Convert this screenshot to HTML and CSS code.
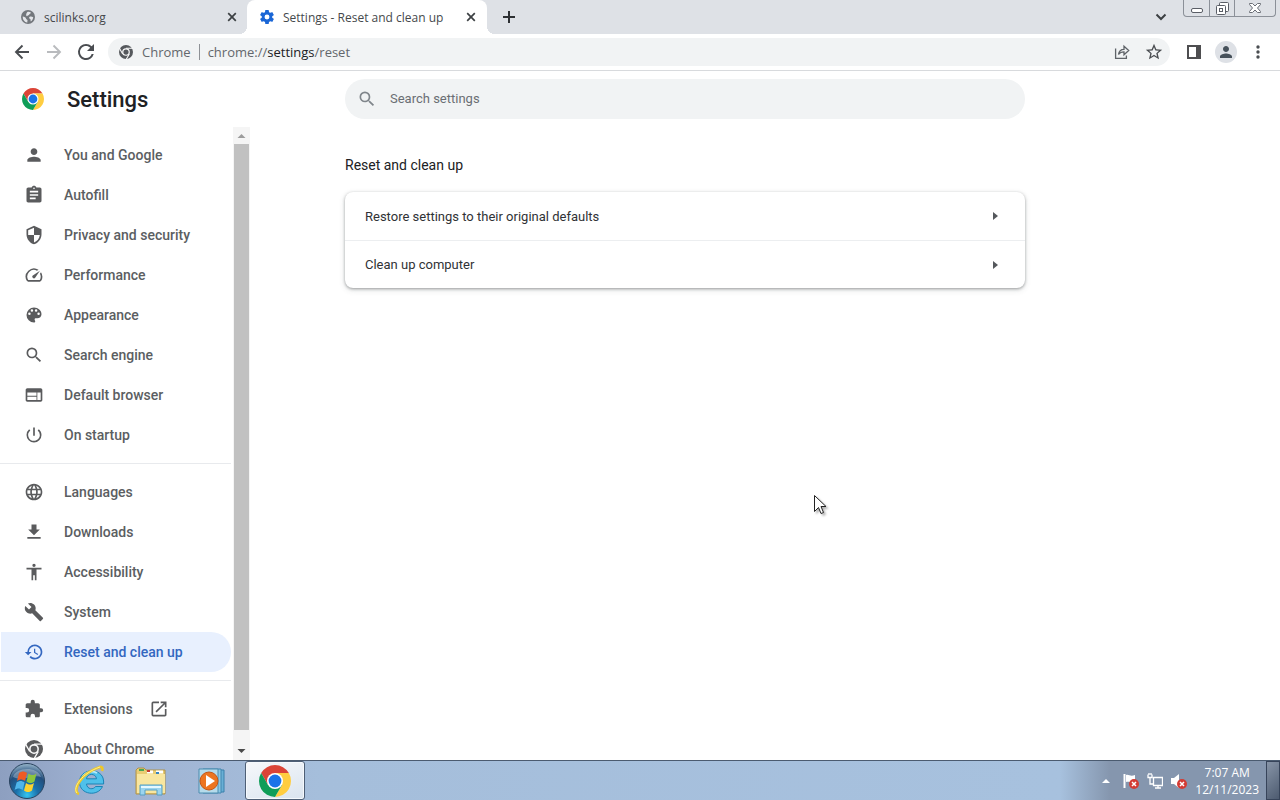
FILE: index.html
```html
<!DOCTYPE html>
<html lang="en">
<head>
<meta charset="utf-8">
<title>Settings - Reset and clean up</title>
<link rel="stylesheet" href="styles.css">
</head>
<body>
<svg class="defs" aria-hidden="true">
  <symbol id="close" viewBox="0 0 10 10"><path d="M1.2 1.2l7.6 7.6M8.8 1.2L1.2 8.8" stroke="currentColor" stroke-width="1.7" fill="none"/></symbol>
  <symbol id="search" viewBox="0 0 24 24"><path d="M15.5 14h-.79l-.28-.27A6.471 6.471 0 0 0 16 9.5 6.5 6.5 0 1 0 9.5 16c1.61 0 3.09-.59 4.23-1.57l.27.28v.79l5 4.99L20.49 19l-4.99-5zm-6 0C7.01 14 5 11.99 5 9.5S7.01 5 9.5 5 14 7.01 14 9.5 11.99 14 9.5 14z"/></symbol>
  <symbol id="person" viewBox="0 0 24 24"><path d="M12 12c2.21 0 4-1.79 4-4s-1.79-4-4-4-4 1.79-4 4 1.79 4 4 4zm0 2c-2.67 0-8 1.34-8 4v2h16v-2c0-2.66-5.33-4-8-4z"/></symbol>
  <symbol id="chrome-color" viewBox="4 4 40 40">
    <path fill="#db4437" d="M6.68 14A20 20 0 0 1 41.32 14H24L15.34 29z"/>
    <path fill="#ffcd40" d="M41.32 14A20 20 0 0 1 24 44L32.66 29 24 14z"/>
    <path fill="#0f9d58" d="M24 44A20 20 0 0 1 6.68 14L15.34 29H32.66z"/>
    <circle cx="24" cy="24" r="10" fill="#fff"/><circle cx="24" cy="24" r="8" fill="#1a73e8"/>
  </symbol>
  <symbol id="chrome-mono" viewBox="4 4 40 40">
    <circle cx="24" cy="24" r="20"/>
    <path d="M24 13H44M14.5 29.5L4.5 12.200M33.500 29.500L23.500 46.800" stroke="#fafafa" stroke-width="3" fill="none"/>
    <circle cx="24" cy="24" r="11" fill="#fafafa"/><circle cx="24" cy="24" r="7.500"/>
  </symbol>
</svg>

<header class="tabstrip">
  <div class="tab">
    <svg class="favicon" viewBox="0 0 16 16"><circle cx="8" cy="8" r="8" fill="#73777c"/><path d="M2 7.500c2 .2 3.500 1 3.800 2.500.2 1 1.700.8 1.700 2 0 1-.5 1.500-.3 2.500C4 14 1.800 11 2 7.500zM7 2.500c1-.6 3-.5 4.500.5-.8.500-.5 1.300-1.500 1.500-.8.200-.5 1.500-1.800 1.500-.8 0-.6 1-1.400 1C5.500 7 5.600 4 7 2.500zM9.500 8c1.500-1 3-.6 4.500.2-.2 2-1.300 3.800-2.800 4.800-.6-1 .2-2-.7-2.700C9.600 9.800 9 9 9.500 8z" fill="#e3e5e9"/></svg>
    <span class="tab-title">scilinks.org</span>
    <button class="icon-btn" aria-label="Close tab"><svg class="ico-x"><use href="#close"/></svg></button>
  </div>
  <div class="tab active">
    <svg class="favicon" viewBox="2 2 20 20" fill="#1a66d6"><path d="M19.430 12.980c.04-.32.07-.64.07-.98s-.03-.66-.07-.98l2.110-1.650c.19-.15.24-.42.12-.64l-2-3.460c-.12-.22-.39-.3-.61-.22l-2.490 1c-.52-.4-1.080-.73-1.690-.98l-.38-2.650A.488.488 0 0 0 14 2h-4c-.25 0-.46.18-.49.42l-.38 2.650c-.61.25-1.170.59-1.690.98l-2.490-1c-.23-.09-.49 0-.61.22l-2 3.460c-.13.22-.07.49.12.64l2.110 1.650c-.04.32-.07.65-.07.98s.03.66.07.98l-2.110 1.650c-.19.15-.24.42-.12.64l2 3.460c.12.22.39.3.61.22l2.490-1c.52.4 1.080.73 1.690.98l.38 2.650c.03.24.24.42.49.42h4c.25 0 .46-.18.49-.42l.38-2.650c.61-.25 1.170-.59 1.690-.98l2.490 1c.23.09.49 0 .61-.22l2-3.460c.12-.22.07-.49-.12-.64l-2.110-1.650zM12 15.500a3.500 3.500 0 1 1 0-7 3.500 3.500 0 0 1 0 7z"/></svg>
    <span class="tab-title">Settings - Reset and clean up</span>
    <button class="icon-btn" aria-label="Close tab"><svg class="ico-x"><use href="#close"/></svg></button>
  </div>
  <button class="icon-btn new-tab" aria-label="New tab"><svg width="12" height="12" viewBox="0 0 12 12"><path d="M6 0v12M0 6h12" stroke="#2d3033" stroke-width="2"/></svg></button>
  <button class="icon-btn tab-search" aria-label="Search tabs"><svg width="12" height="8" viewBox="0 0 12 8"><path d="M1.500 1.500L6 6l4.500-4.500" stroke="#3c4043" stroke-width="2" fill="none"/></svg></button>
  <div class="win-controls">
    <button aria-label="Minimize"><svg width="14" height="16" viewBox="0 0 14 16"><rect x="1.500" y="8.500" width="11" height="4" rx="1.500" fill="#fff" stroke="#5a5e66"/></svg></button>
    <button aria-label="Restore"><svg width="14" height="16" viewBox="0 0 14 16" fill="#fff" stroke="#5a5e66"><rect x="4.500" y="2.500" width="9" height="9" rx="1"/><rect x="1.500" y="5.500" width="9" height="9" rx="1"/><rect x="4.500" y="8.500" width="3" height="3"/></svg></button>
    <button class="wide" aria-label="Close"><svg width="14" height="16" viewBox="0 0 14 16"><path d="M1.500 3.500h3L7 6l2.500-2.500h3v1L9.500 8l3 3.500v1h-3L7 10l-2.500 2.500h-3v-1l3-3.500-3-3.500z" fill="#fff" stroke="#6a6e76"/></svg></button>
  </div>
</header>

<nav class="toolbar" aria-label="Browser toolbar">
  <button class="icon-btn nav-btn" aria-label="Back"><svg width="16" height="16" viewBox="0 0 16 16"><path d="M15 8H2.500M8.500 1.500L2 8l6.500 6.500" fill="none" stroke="#4a4d51" stroke-width="1.900"/></svg></button>
  <button class="icon-btn nav-btn" aria-label="Forward"><svg width="16" height="16" viewBox="0 0 16 16"><path d="M1 8h12.500M7.500 1.500L14 8l-6.500 6.500" fill="none" stroke="#b9bbbe" stroke-width="1.900"/></svg></button>
  <button class="icon-btn nav-btn" aria-label="Reload"><svg width="20" height="20" viewBox="2 2 20 20" fill="#4a4d51"><path d="M17.650 6.350A7.958 7.958 0 0 0 12 4a8 8 0 1 0 7.730 10h-2.080A5.990 5.990 0 0 1 12 18c-3.310 0-6-2.690-6-6s2.690-6 6-6c1.660 0 3.140.69 4.220 1.780L13 11h7V4l-2.350 2.350z"/></svg></button>
  <div class="omnibox">
    <svg class="ico14 grey"><use href="#chrome-mono"/></svg>
    <span class="chip">Chrome</span>
    <span class="url">chrome://<b>settings</b>/reset</span>
    <button class="icon-btn act" aria-label="Share"><svg width="16" height="16" viewBox="0 0 16 16" fill="none" stroke="#5f6368" stroke-width="1.300"><path d="M1.600 4.500v9.900h10.800v-3M4.500 10.500C5 7 7 5.300 10 5.300V2.200l4.700 4.300L10 10.800V7.800C7.500 7.800 5.800 8.500 4.500 10.500z"/></svg></button>
    <button class="icon-btn act" aria-label="Bookmark"><svg width="18" height="18" viewBox="1 1 22 22" fill="#4a4d51"><path d="M22 9.240l-7.190-.62L12 2 9.190 8.630 2 9.240l5.460 4.730L5.820 21 12 17.270 18.180 21l-1.630-7.030L22 9.240zM12 15.400l-3.760 2.270 1-4.280-3.320-2.880 4.380-.38L12 6.100l1.710 4.040 4.380.38-3.320 2.880 1 4.280L12 15.400z"/></svg></button>
  </div>
  <button class="icon-btn nav-btn" aria-label="Side panel"><svg width="14" height="14" viewBox="0 0 14 14"><rect x="1" y="1" width="12" height="12" fill="#fff" stroke="#4e4e50" stroke-width="2"/><path d="M9 1h4v12H9z" fill="#4e4e50"/></svg></button>
  <button class="icon-btn nav-btn" aria-label="Profile"><svg class="avatar"><use href="#person"/></svg></button>
  <button class="icon-btn nav-btn" aria-label="Menu"><svg width="4" height="14" viewBox="0 0 4 14" fill="#4a4d51"><circle cx="2" cy="2" r="1.700"/><circle cx="2" cy="7" r="1.700"/><circle cx="2" cy="12" r="1.700"/></svg></button>
</nav>

<div class="page">
  <div class="page-head">
    <div class="brand"><svg class="logo"><use href="#chrome-color"/></svg><h1>Settings</h1></div>
    <label class="search"><svg class="ico20"><use href="#search"/></svg><input type="search" placeholder="Search settings" aria-label="Search settings"></label>
  </div>
  <div class="page-body">
    <nav class="sidebar" aria-label="Settings">
      <div class="menu">
        <a href="#you"><svg class="ico20"><use href="#person"/></svg>You and Google</a>
        <a href="#autofill"><svg class="ico20" viewBox="0 0 24 24"><path d="M19 3h-4.180C14.400 1.840 13.300 1 12 1c-1.300 0-2.400.84-2.820 2H5c-1.100 0-2 .9-2 2v14c0 1.100.9 2 2 2h14c1.100 0 2-.9 2-2V5c0-1.100-.9-2-2-2zm-7 0c.55 0 1 .45 1 1s-.45 1-1 1-1-.45-1-1 .45-1 1-1zm2 14H7v-2h7v2zm3-4H7v-2h10v2zm0-4H7V7h10v2z"/></svg>Autofill</a>
        <a href="#privacy"><svg class="ico20" viewBox="0 0 24 24"><path d="M12 1L3 5v6c0 5.550 3.840 10.740 9 12 5.160-1.260 9-6.450 9-12V5l-9-4zm0 10.990h7c-.53 4.120-3.280 7.790-7 8.940V12H5V6.300l7-3.110v8.800z"/></svg>Privacy and security</a>
        <a href="#performance"><svg class="ico20" viewBox="0 0 24 24"><path d="M20.380 8.570l-1.230 1.850a8 8 0 0 1-.22 7.580H5.070A8 8 0 0 1 15.580 6.850l1.850-1.230A10 10 0 0 0 3.350 19a2 2 0 0 0 1.720 1h13.850a2 2 0 0 0 1.740-1 10 10 0 0 0-.27-10.440zm-9.790 6.840a2 2 0 0 0 2.830 0l5.660-8.490-8.490 5.660a2 2 0 0 0 0 2.830z"/></svg>Performance</a>
        <a href="#appearance"><svg class="ico20" viewBox="0 0 24 24"><path d="M12 3a9 9 0 0 0 0 18c.83 0 1.500-.67 1.500-1.500 0-.39-.15-.74-.39-1.010-.23-.26-.38-.61-.38-.99 0-.83.67-1.500 1.500-1.500H16c2.760 0 5-2.240 5-5 0-4.420-4.030-8-9-8zm-5.500 9a1.500 1.500 0 1 1 0-3 1.500 1.500 0 0 1 0 3zm3-4a1.500 1.500 0 1 1 0-3 1.500 1.500 0 0 1 0 3zm5 0a1.500 1.500 0 1 1 0-3 1.500 1.500 0 0 1 0 3zm3 4a1.500 1.500 0 1 1 0-3 1.500 1.500 0 0 1 0 3z"/></svg>Appearance</a>
        <a href="#engine"><svg class="ico20"><use href="#search"/></svg>Search engine</a>
        <a href="#browser"><svg class="ico20" viewBox="0 0 24 24"><path d="M20 4H4c-1.100 0-1.990.9-1.990 2L2 18c0 1.100.9 2 2 2h16c1.100 0 2-.9 2-2V6c0-1.100-.9-2-2-2zm-5 14H4v-4h11v4zm0-5H4V9h11v4zm5 5h-4V9h4v9z"/></svg>Default browser</a>
        <a href="#startup"><svg class="ico20" viewBox="0 0 24 24"><path d="M13 3h-2v10h2V3zm4.830 2.170l-1.420 1.420A6.920 6.920 0 0 1 19 12c0 3.870-3.130 7-7 7A6.995 6.995 0 0 1 7.580 6.580L6.170 5.170A8.932 8.932 0 0 0 3 12a9 9 0 0 0 18 0c0-2.740-1.230-5.180-3.170-6.830z"/></svg>On startup</a>
        <hr>
        <a href="#languages"><svg class="ico20" viewBox="0 0 24 24"><path d="M11.990 2C6.470 2 2 6.480 2 12s4.470 10 9.990 10C17.520 22 22 17.520 22 12S17.520 2 11.990 2zm6.930 6h-2.950a15.650 15.650 0 0 0-1.380-3.560A8.030 8.030 0 0 1 18.920 8zM12 4.040c.83 1.200 1.480 2.530 1.910 3.960h-3.820c.43-1.430 1.080-2.760 1.910-3.960zM4.260 14C4.100 13.360 4 12.690 4 12s.1-1.360.26-2h3.380c-.08.66-.14 1.320-.14 2s.06 1.340.14 2H4.260zm.82 2h2.950c.32 1.250.78 2.450 1.380 3.560A7.987 7.987 0 0 1 5.080 16zm2.950-8H5.080a7.987 7.987 0 0 1 4.330-3.560A15.650 15.650 0 0 0 8.030 8zM12 19.960c-.83-1.200-1.480-2.530-1.910-3.960h3.820c-.43 1.430-1.080 2.760-1.910 3.960zM14.340 14H9.660c-.09-.66-.16-1.320-.16-2s.07-1.350.16-2h4.680c.09.65.16 1.320.16 2s-.07 1.340-.16 2zm.25 5.560c.6-1.110 1.060-2.310 1.380-3.560h2.950a8.030 8.030 0 0 1-4.330 3.560zM16.360 14c.08-.66.14-1.320.14-2s-.06-1.340-.14-2h3.380c.16.64.26 1.310.26 2s-.1 1.360-.26 2h-3.380z"/></svg>Languages</a>
        <a href="#downloads"><svg class="ico20" viewBox="0 0 24 24"><path d="M19 9h-4V3H9v6H5l7 7 7-7zM4 18v2h16v-2H4z"/></svg>Downloads</a>
        <a href="#accessibility"><svg class="ico20" viewBox="0 0 24 24"><path d="M12 2a2 2 0 1 1 0 4 2 2 0 0 1 0-4zm9 7h-6v13h-2v-6h-2v6H9V9H3V7h18v2z"/></svg>Accessibility</a>
        <a href="#system"><svg class="ico20" viewBox="0 0 24 24"><path d="M22.700 19l-9.100-9.100c.9-2.300.4-5-1.500-6.900-2-2-5-2.400-7.400-1.300L9 6 6 9 1.600 4.700C.4 7.100.9 10.100 2.900 12.100c1.900 1.900 4.600 2.400 6.900 1.500l9.100 9.100c.4.4 1 .4 1.400 0l2.300-2.300c.5-.4.5-1.100.1-1.400z"/></svg>System</a>
        <a href="#reset" class="selected" aria-current="page"><svg class="ico20" viewBox="0 0 24 24"><path d="M13 3a9 9 0 0 0-9 9H1l3.890 3.890.07.14L9 12H6c0-3.870 3.130-7 7-7s7 3.130 7 7-3.130 7-7 7a6.960 6.960 0 0 1-4.940-2.060l-1.420 1.420A9 9 0 1 0 13 3zm-1 5v5l4.280 2.540.72-1.210-3.500-2.080V8H12z"/></svg>Reset and clean up</a>
        <hr>
        <a href="#extensions"><svg class="ico20" viewBox="0 0 24 24"><path d="M20.500 11H19V7c0-1.100-.9-2-2-2h-4V3.500a2.500 2.500 0 0 0-5 0V5H4c-1.100 0-1.990.9-1.990 2v3.800H3.500a2.700 2.700 0 0 1 0 5.400H2V20c0 1.100.9 2 2 2h3.800v-1.500a2.700 2.700 0 0 1 5.400 0V22H17c1.100 0 2-.9 2-2v-4h1.500a2.500 2.500 0 0 0 0-5z"/></svg>Extensions<svg class="ico20 ext" viewBox="0 0 24 24"><path d="M19 19H5V5h7V3H5a2 2 0 0 0-2 2v14a2 2 0 0 0 2 2h14c1.100 0 2-.9 2-2v-7h-2v7zM14 3v2h3.590l-9.830 9.830 1.410 1.410L19 6.410V10h2V3h-7z"/></svg></a>
        <a href="#about"><svg class="ico18"><use href="#chrome-mono"/></svg>About Chrome</a>
      </div>
      <div class="scrollbar" aria-hidden="true">
        <svg class="arrow" viewBox="0 0 15 17"><path d="M3.500 11L7.500 7l4 4z" fill="#9c9c9c"/></svg>
        <div class="thumb"></div>
        <svg class="arrow" viewBox="0 0 15 17"><path d="M3.500 6l4 4 4-4z" fill="#4a4a4a"/></svg>
      </div>
    </nav>
    <main>
      <h2>Reset and clean up</h2>
      <div class="card">
        <button class="row">Restore settings to their original defaults<svg width="5" height="8" viewBox="0 0 5 8"><path d="M0 0l5 4-5 4z" fill="#55585c"/></svg></button>
        <button class="row">Clean up computer<svg width="5" height="8" viewBox="0 0 5 8"><path d="M0 0l5 4-5 4z" fill="#55585c"/></svg></button>
      </div>
    </main>
  </div>
</div>

<footer class="taskbar">
  <button class="start" aria-label="Start"><svg width="38" height="38" viewBox="0 0 38 38">
    <defs><radialGradient id="orb" cx=".5" cy=".9" r=".9"><stop offset="0" stop-color="#35c5f0"/><stop offset=".35" stop-color="#1a70aa"/><stop offset=".7" stop-color="#234e7c"/><stop offset="1" stop-color="#9ab8cc"/></radialGradient></defs>
    <circle cx="19" cy="19" r="17.500" fill="url(#orb)" stroke="#29435f"/>
    <path d="M5 15C8 5 29 4 33 15c-8-3-18 5-28 0z" fill="#fff" opacity=".3"/>
    <path d="M11 11c3-2 5-2 8 0l-2 8c-3-2-5-2-8 0z" fill="#ee5a24"/><path d="M20.500 11.500c3 2 5 2 8 0l-2 8c-3 2-5 2-8 0z" fill="#8cc63e"/>
    <path d="M8.600 20.500c3-2 5-2 8 0l-2 7.500c-3-2-5-2-8 0z" fill="#4fb5ea"/><path d="M18 21c3 2 5 2 8 0l-2 7.500c-3 2-5 2-8 0z" fill="#fdd22f"/>
  </svg></button>
  <button class="task" aria-label="Internet Explorer"><svg width="34" height="34" viewBox="0 0 34 34">
    <path d="M29.500 22.500C25 33 6.500 31 6.500 18S26 3 30 14c.7 2 .7 4 .6 6H13.500c.5 5.500 7 6 9 2.500zM13.500 14.800h10c-.5-5.800-9.500-5.800-10 0z" fill="#4fc0ea" fill-rule="evenodd" stroke="#1c83b5"/>
    <path d="M10 12c3-4 9-6 14-3" stroke="#b4e9fa" stroke-width="2" fill="none"/>
    <path d="M6 30C-2 27 8 9 27 3c2-.5 3 1 2 4" fill="none" stroke="#edc728" stroke-width="2.800"/><path d="M4 29C-1 24 9 9 27 3" fill="none" stroke="#fff08d"/>
  </svg></button>
  <button class="task" aria-label="Windows Explorer"><svg width="34" height="34" viewBox="0 0 34 34">
    <path d="M2 6l2-2h6l2 2h19v24H2z" fill="#e9cd73" stroke="#ae924c"/><path d="M3 10h28v19H3z" fill="#f8e6a0"/><path d="M5 6h5" stroke="#49a653" stroke-width="2"/><path d="M13 8h6" stroke="#fff" stroke-width="3"/><path d="M13 7h3" stroke="#c73d30" stroke-width="2"/><path d="M22 8h7" stroke="#fff" stroke-width="3"/><path d="M22 9h3" stroke="#3785bf" stroke-width="2"/>
    <path d="M6 31V21h22v10h-5v-5H11v5z" fill="#9bd4ee" stroke="#559fc4"/><path d="M7 23h20" stroke="#e5f8ff" stroke-width="2"/>
  </svg></button>
  <button class="task" aria-label="Media Player"><svg width="34" height="34" viewBox="0 0 34 34">
    <path d="M11 6h18v22H11z" fill="#68afd5" stroke="#3b80ab"/><path d="M8 5h18v24H8z" fill="#8bc8e4" stroke="#4386af"/><path d="M4 5h19v24H4z" fill="#b5dbeb" stroke="#4b8caf"/>
    <circle cx="14" cy="17" r="9" fill="#ec7520" stroke="#c55614"/><path d="M11 11l9 6-9 6z" fill="#fff"/>
  </svg></button>
  <button class="task running" aria-label="Google Chrome"><svg class="ico32"><use href="#chrome-color"/></svg></button>
  <div class="tray">
    <button aria-label="Show hidden icons"><svg width="8" height="4" viewBox="0 0 8 4"><path d="M0 4l4-4 4 4z" fill="#fff"/></svg></button>
    <button aria-label="Action Center"><svg width="16" height="16" viewBox="0 0 16 16"><path d="M1.500 1v14" stroke="#fff" stroke-width="2"/><path d="M3 2c3-1 4 2 9 0v7c-5 1-6-1-9 0z" fill="#fff"/><circle cx="11" cy="11" r="5" fill="#d33c34"/><path d="M9 9l4 4M13 9l-4 4" stroke="#fff" stroke-width="1.500"/></svg></button>
    <button aria-label="Network"><svg width="16" height="16" viewBox="0 0 16 16" fill="none" stroke="#fff"><path d="M5.500 4.500h10v8h-9v-8M8 15h6M11 12v3" stroke-width="1.300"/><path d="M1 1.500v3h4v-3M3 4v7h3M2 0v2M4 0v2" stroke-width="1.300"/></svg></button>
    <button aria-label="Volume muted"><svg width="16" height="16" viewBox="0 0 16 16"><path d="M0 5h3l5-4v14l-5-4H0z" fill="#fff"/><circle cx="11" cy="11" r="5" fill="#d33c34"/><path d="M9 9l4 4M13 9l-4 4" stroke="#fff" stroke-width="1.500"/></svg></button>
    <time class="clock" datetime="2023-12-11T07:07">7:07 AM<br>12/11/2023</time>
    <button class="show-desktop" aria-label="Show desktop"></button>
  </div>
</footer>

<svg class="cursor" viewBox="0 0 14 20" aria-hidden="true"><path d="M.5.5v16l4-4 2.500 6 2.500-1-2.500-6h5z" fill="#fff" stroke="#222"/></svg>
</body>
</html>
```
FILE: styles.css
```css
* { box-sizing: border-box; }
body {
  margin: 0;
  height: 100vh;
  display: flex;
  flex-direction: column;
  overflow: hidden;
  background: #fff;
  color: #202124;
  font-family: Roboto, sans-serif;
  font-size: 13px;
}
button { font: inherit; color: inherit; border: 0; padding: 0; background: none; }
svg { display: block; flex: none; }
.defs { position: absolute; width: 0; height: 0; }
.icon-btn { display: flex; align-items: center; justify-content: center; flex: none; }
.ico14 { width: 14px; height: 14px; }
.ico18 { width: 18px; height: 18px; margin: 0 1px; }
.ico20 { width: 20px; height: 20px; }
.ico32 { width: 32px; height: 32px; }
.ico-x { width: 10px; height: 10px; }
.grey { fill: #55585c; }

/* Tabs */
.tabstrip {
  display: flex;
  flex: none;
  height: 34px;
  padding: 0 4px 0 7px;
  background: #dee1e6;
  font: 12px "Open Sans", sans-serif;
  color: #45484c;
}
.tab {
  flex: 0 1 240px;
  min-width: 0;
  display: flex;
  align-items: center;
  gap: 9px;
  padding: 0 10px 0 14px;
}
.tab.active { position: relative; background: #fff; border-radius: 8px 8px 0 0; padding: 0 11px 0 13px; }
.tab.active::before, .tab.active::after {
  content: "";
  position: absolute;
  bottom: 0;
  width: 8px;
  height: 8px;
}
.tab.active::before { left: -8px; background: radial-gradient(circle at 0 0, #dee1e6 8px, #fff 8px); }
.tab.active::after { right: -8px; background: radial-gradient(circle at 100% 0, #dee1e6 8px, #fff 8px); }
.favicon { width: 14px; height: 14px; }
.tab-title { flex: 1; overflow: hidden; white-space: nowrap; }
.tab .icon-btn { color: #3c4043; }
.new-tab { width: 28px; margin-left: 8px; }
.tab-search { width: 28px; margin-left: auto; }
.win-controls {
  display: flex;
  height: 17px;
  margin-left: 8px;
  border: 1px solid #8b9098;
  border-top: 0;
  border-radius: 0 0 4px 4px;
}
.win-controls button { width: 25px; display: flex; justify-content: center; }
.win-controls button + button { border-left: 1px solid #8b9098; }
.win-controls .wide { width: 41px; }

/* Toolbar */
.toolbar {
  display: flex;
  align-items: center;
  flex: none;
  height: 37px;
  padding: 0 6px;
  border-bottom: 1px solid #d8dadd;
}
.nav-btn { width: 32px; height: 28px; }
.omnibox {
  flex: 1;
  display: flex;
  align-items: center;
  height: 28px;
  margin: 0 8px 0 6px;
  padding: 0 0 0 11px;
  border-radius: 14px;
  background: #f1f3f4;
  color: #63676c;
  font: 13px "Open Sans", sans-serif;
}
.chip { padding: 0 8px 0 9px; border-right: 1px solid #8e9196; line-height: 16px; }
.url { flex: 1; padding-left: 8px; }
.url b { font-weight: 400; color: #202124; }
.act { width: 32px; height: 28px; }
.avatar { width: 22px; height: 22px; padding: 2px; border-radius: 50%; background: #dee1e6; fill: #46515a; }

/* Settings page */
.page { flex: 1; min-height: 0; display: flex; flex-direction: column; }
.page-head { display: flex; align-items: center; flex: none; height: 56px; }
.brand { flex: none; width: 345px; display: flex; align-items: center; gap: 23px; padding-left: 22px; }
.logo { width: 22px; height: 22px; }
h1 { margin: 0; font-size: 22px; font-weight: 500; }
.search {
  flex: 0 1 680px;
  display: flex;
  align-items: center;
  gap: 13px;
  height: 40px;
  padding: 0 12px;
  border-radius: 20px;
  background: #f1f3f4;
  fill: #80868b;
}
.search input { flex: 1; border: 0; padding: 0 0 1px; outline: 0; background: none; font: 13px Roboto, sans-serif; }
.search input::placeholder { color: #6a6e73; }
.page-body { flex: 1; min-height: 0; display: flex; }
.sidebar { flex: none; width: 250px; display: flex; }
.menu { flex: 1; overflow: hidden; padding: 8px 2px 0 0; }
.menu a {
  display: flex;
  align-items: center;
  gap: 20px;
  height: 40px;
  margin-left: 1px;
  padding-left: 23px;
  border-radius: 0 20px 20px 0;
  color: #5b5e62;
  fill: #5a5b5d;
  font-size: 14px;
  line-height: 18px;
  font-weight: 500;
  text-decoration: none;
}
.menu a.selected { background: #e8f0fe; color: #3367c0; fill: #3367c0; }
.menu .ext { margin-left: -4px; }
hr { height: 1px; margin: 8px 0; border: 0; background: #e8eaed; }
.scrollbar { flex: none; width: 17px; padding: 0 1px; display: flex; flex-direction: column; background: #f5f5f5; }
.arrow { width: 15px; height: 17px; }
.thumb { flex: 1; margin-bottom: 13px; background: #c1c1c1; }
main { flex: 1; padding-left: 95px; }
h2 { margin: 0; padding: 28px 0 16px; font-size: 14px; line-height: 21px; font-weight: 400; }
.card {
  max-width: 680px;
  border-radius: 8px;
  box-shadow: 0 1px 3px rgba(60, 64, 67, .45), 0 2px 6px rgba(60, 64, 67, .15);
}
.row {
  display: flex;
  align-items: center;
  justify-content: space-between;
  width: 100%;
  height: 48px;
  padding: 0 27px 0 20px;
  color: #303235;
}
.row + .row { border-top: 1px solid #eceef0; }

/* Taskbar */
.taskbar {
  display: flex;
  align-items: center;
  flex: none;
  height: 40px;
  border-top: 1px solid #4b5b70;
  background: linear-gradient(90deg, #8d9fc0, #9fb2d2 100px, #a5bedb 320px, #a7c1de 1060px, #8596ae 1110px);
}
.start { width: 54px; padding-left: 8px; }
.task { width: 61px; display: flex; align-items: center; justify-content: center; }
.task:nth-child(2) { margin-left: 5px; }
.task.running {
  width: 60px;
  height: 39px;
  margin-left: 3px;
  border: 1px solid #4e5f76;
  border-radius: 3px;
  background: linear-gradient(160deg, #f6f8fb, #dae4ef);
  box-shadow: inset 0 0 0 1px #f5f9fd;
}
.tray { display: flex; align-items: center; align-self: stretch; gap: 8px; margin-left: auto; }
.tray button:first-child { margin-right: 5px; }
.clock { margin: 0 5px 0 0; color: #fff; font: 12px/17px "Open Sans", sans-serif; text-align: center; }
.tray .show-desktop {
  align-self: stretch;
  width: 14px;
  margin-left: -6px;
  border: 1px solid #37445a;
  background: linear-gradient(135deg, #8794a7, #4d5b70);
}

/* Pointer drawn over the page */
.cursor { position: absolute; left: 814px; top: 495px; width: 14px; height: 20px; filter: drop-shadow(2px 2px 1px rgba(0, 0, 0, .3)); }
```
